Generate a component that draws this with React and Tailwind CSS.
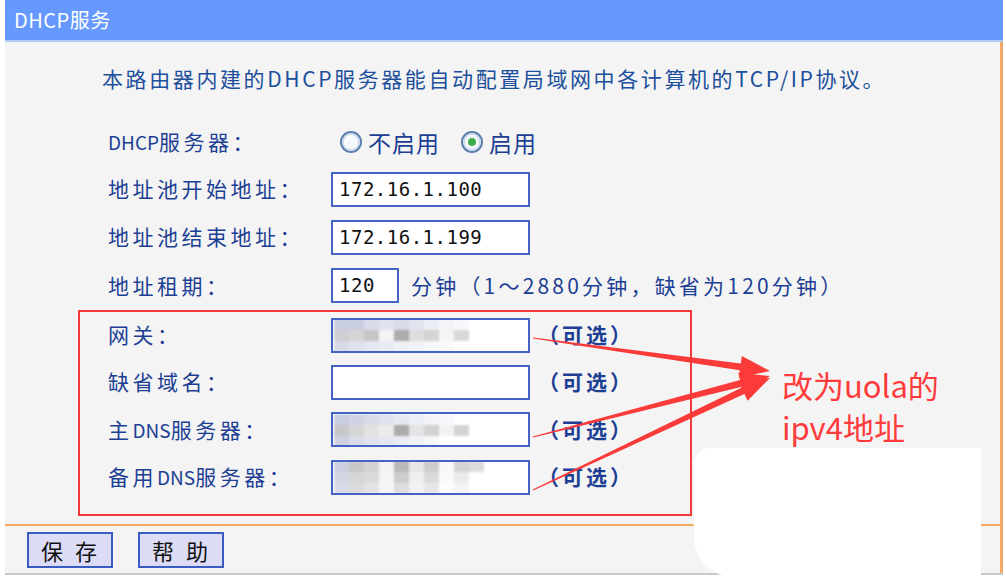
const cjk = { fontFamily: "'Noto Sans CJK SC', 'DejaVu Sans', sans-serif" };
const mono = { fontFamily: "'DejaVu Sans Mono', 'Liberation Mono', monospace" };

const blurRows = {
  gw: [
    ["#c9cde0", "#c9cde0", "#d8dbe8", "#dfe2ee", "#d8dbe8", "#e2e4ef", "#eceef5", "#f3f4f8", "#f7f8fb"],
    ["#cfcfd4", "#d6d6d6", "#c6c6c6", "#f4f4f4", "#acacac", "#dedede", "#d4d4d4", "#f4f4f4", "#d8d8d8"],
    ["#d6d9e6", "#dfe2ee", "#e4e6f0", "#e9ebf3", "#eef0f6", "#f2f3f8", "#f6f7fa", "#fafafc", "#ffffff"],
  ],
  dns: [
    ["#c9cde0", "#d0d3e3", "#d8dbe8", "#dfe2ee", "#e6e8f1", "#eceef5", "#f3f4f8", "#f7f8fb", "#ffffff"],
    ["#c8c8cc", "#d6d6d6", "#e2e2e2", "#ececec", "#acacac", "#e4e4e4", "#d2d2d2", "#f2f2f2", "#d4d4d4"],
    ["#ced1e2", "#d8dbe8", "#e0e2ee", "#e6e8f1", "#ecedf4", "#f1f2f7", "#f6f7fa", "#ffffff", "#ffffff"],
  ],
  alt: [
    ["#cbcfe0", "#c8c8c8", "#d2d2d2", "#f2f2f2", "#b8b8b8", "#e6e6e6", "#cccccc", "#f8f8f8", "#d4d4d4", "#dcdcdc"],
    ["#d2d5e4", "#d6d6d6", "#dadada", "#f4f4f4", "#cccccc", "#efefef", "#dadada", "#fafafa", "#ebebeb", "#ffffff"],
    ["#d8dbe8", "#dcdcdc", "#e4e4e4", "#f6f6f6", "#dddddd", "#f2f2f2", "#e6e6e6", "#fcfcfc", "#f4f4f4", "#ffffff"],
  ],
};

const Blurred = ({ rows }) => (
  <div className="flex flex-col pt-[1px] pl-[1px] blur-[1px]">
    {rows.map((row, i) => (
      <div key={i} className="flex">
        {row.map((c, j) => (
          <div key={j} className="w-[15px] h-[11px]" style={{ backgroundColor: c }} />
        ))}
      </div>
    ))}
  </div>
);

const Input = ({ value, width = "w-[199px]", children }) => (
  <div
    className={`${width} h-[35px] bg-white border-2 border-[#4563c4] flex items-center overflow-hidden text-[19px] text-[#111]`}
    style={mono}
  >
    {value && <span className="pl-[6px] tracking-[0.5px]">{value}</span>}
    {children}
  </div>
);

const Radio = ({ checked }) => (
  <svg width="24" height="24" viewBox="0 0 24 24" className="shrink-0">
    <circle cx="12" cy="12" r="10" fill="#f4f7fb" stroke="#5a7fae" strokeWidth="2" />
    <circle cx="12" cy="12" r="8" fill="none" stroke="#c9d8ea" strokeWidth="1.5" />
    {checked ? (
      <circle cx="12" cy="12" r="4" fill="#3fae49" />
    ) : (
      <path d="M6 15 Q7 8 13 6" fill="none" stroke="#ffffff" strokeWidth="2" />
    )}
  </svg>
);

const Optional = () => (
  <span className="ml-[8px] text-[21px] font-bold text-[#1c3f94] tracking-[3px]" style={cjk}>
    （可选）
  </span>
);

const Label = ({ latin, children }) => (
  <div className="w-[223px] shrink-0 text-[21px] text-[#1c3f94] tracking-[3.5px]" style={cjk}>
    {latin && <span className="text-[19px] tracking-[0px]">{latin}</span>}
    {children}
  </div>
);

const arrow = (x1, y1, x2, y2) => {
  const len = Math.hypot(x2 - x1, y2 - y1);
  const dx = (x2 - x1) / len;
  const dy = (y2 - y1) / len;
  const nx = -dy;
  const ny = dx;
  const head = 30;
  const bx = x2 - dx * head;
  const by = y2 - dy * head;
  const pts = [
    [x1 + nx * 0.6, y1 + ny * 0.6],
    [bx + nx * 3.5, by + ny * 3.5],
    [bx + nx * 11, by + ny * 11],
    [x2, y2],
    [bx - nx * 11, by - ny * 11],
    [bx - nx * 3.5, by - ny * 3.5],
    [x1 - nx * 0.6, y1 - ny * 0.6],
  ];
  return pts.map((p) => p.join(",")).join(" ");
};

export default function App() {
  return (
    <div className="relative w-[1006px] h-[577px] bg-white overflow-hidden" style={cjk}>
      <div className="ml-[5px] w-[998px] flex flex-col">
        <div className="h-[42px] bg-[#6699ff] border-b-2 border-[#b3c9f7] flex items-center pl-[9px]">
          <span className="text-white text-[20px] tracking-[0.5px]">DHCP服务</span>
        </div>
        <div className="h-[531px] bg-[#f4f4f4] border-r-[3px] border-[#f2a866] flex flex-col">
          <div className="pt-[21px] pl-[97px] h-[77px] text-[21px] text-[#1c4f9c] tracking-[2.6px]">
            本路由器内建的DHCP服务器能自动配置局域网中各计算机的TCP/IP协议。
          </div>

          <div className="pl-[103px] flex flex-col">
            <div className="h-[46px] flex items-center">
              <Label latin="DHCP">服务器：</Label>
              <div className="ml-[8px] flex items-center text-[23px] text-[#1c3f94]">
                <Radio />
                <span className="ml-[5px] tracking-[1px]">不启用</span>
                <span className="ml-[20px]"><Radio checked /></span>
                <span className="ml-[5px] tracking-[1px]">启用</span>
              </div>
            </div>
            <div className="h-[48px] flex items-center">
              <Label>地址池开始地址：</Label>
              <Input value="172.16.1.100" />
            </div>
            <div className="h-[48px] flex items-center">
              <Label>地址池结束地址：</Label>
              <Input value="172.16.1.199" />
            </div>
            <div className="h-[49px] flex items-center">
              <Label>地址租期：</Label>
              <Input value="120" width="w-[68px]" />
              <span className="ml-[12px] text-[21px] text-[#1c3f94] tracking-[3.2px]">
                分钟（1～2880分钟，缺省为120分钟）
              </span>
            </div>
          </div>

          <div className="ml-[73px] w-[614px] border-2 border-[#f23a3a] pl-[28px] pb-[13px] flex flex-col">
            <div className="h-[46px] flex items-center">
              <Label>网关：</Label>
              <Input>
                <Blurred rows={blurRows.gw} />
              </Input>
              <Optional />
            </div>
            <div className="h-[48px] flex items-center">
              <Label>缺省域名：</Label>
              <Input />
              <Optional />
            </div>
            <div className="h-[47px] flex items-center">
              <Label>
                主<span className="text-[19px] tracking-[0px]">DNS</span>服务器：
              </Label>
              <Input>
                <Blurred rows={blurRows.dns} />
              </Input>
              <Optional />
            </div>
            <div className="h-[48px] flex items-center">
              <Label>
                备用<span className="text-[19px] tracking-[0px]">DNS</span>服务器：
              </Label>
              <Input>
                <Blurred rows={blurRows.alt} />
              </Input>
              <Optional />
            </div>
          </div>

          <div className="mt-[8px] h-[2px] bg-[#f5aa62]" />
          <div className="flex items-center gap-[25px] pl-[22px] pt-[6px]">
            <button className="w-[86px] h-[36px] bg-[#dcdcf7] border-2 border-[#3a5cc0] text-[22px] text-[#111] tracking-[12px] pl-[10px]">
              保存
            </button>
            <button className="w-[86px] h-[36px] bg-[#dcdcf7] border-2 border-[#3a5cc0] text-[22px] text-[#111] tracking-[12px] pl-[10px]">
              帮助
            </button>
          </div>
        </div>
        <div className="h-[2px] bg-[#c8c8c8]" />
      </div>

      <div className="absolute left-[694px] top-[448px] w-[287px] h-[129px] bg-white rounded-tl-[16px] rounded-bl-[40px]" />

      <svg className="absolute left-0 top-0" width="1006" height="577">
        <polygon points={arrow(533, 338, 770, 371)} fill="#fb3a3a" />
        <polygon points={arrow(533, 437, 770, 376)} fill="#fb3a3a" />
        <polygon points={arrow(533, 490, 770, 378)} fill="#fb3a3a" />
      </svg>

      <div className="absolute left-[782px] top-[364px] text-[31px] leading-[42px] text-[#ff3b3b]">
        <div>改为uola的</div>
        <div>ipv4地址</div>
      </div>
    </div>
  );
}
